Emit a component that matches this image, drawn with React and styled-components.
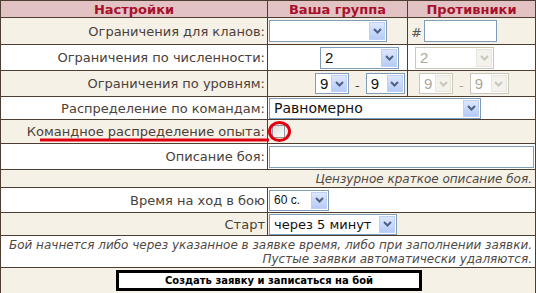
import styled, { createGlobalStyle } from 'styled-components';

const GlobalStyle = createGlobalStyle`
  html, body {
    margin: 0;
    padding: 0;
    background: #fff;
  }
  body {
    font-family: 'DejaVu Sans', Verdana, sans-serif;
    color: #4a413a;
  }
`;

const rowBg = {
  head: '#e2c2c2',
  cream: '#f5f1e7',
  white: '#ffffff',
};

const Frame = styled.div`
  width: 536px;
  box-sizing: border-box;
  border: 1px solid #4e3e31;
`;

const Row = styled.div`
  position: relative;
  display: flex;
  height: ${({ $h }) => $h}px;
  background: ${({ $bg }) => rowBg[$bg]};
  & + & {
    border-top: 1px solid #4e3e31;
  }
`;

const Label = styled.div`
  width: 266px;
  flex: none;
  display: flex;
  align-items: center;
  justify-content: flex-end;
  padding-right: 2px;
  box-sizing: border-box;
  font-size: 13px;
  white-space: nowrap;
`;

const Cell = styled.div`
  display: flex;
  align-items: center;
  gap: ${({ $gap }) => $gap || 0}px;
  width: ${({ $w }) => ($w ? `${$w}px` : 'auto')};
  flex: ${({ $w }) => ($w ? 'none' : 1)};
  padding-left: ${({ $pl }) => $pl || 0}px;
  box-sizing: border-box;
  border-left: 1px solid #4e3e31;
`;

const HeadCell = styled.div`
  width: ${({ $w }) => ($w ? `${$w}px` : 'auto')};
  flex: ${({ $w }) => ($w ? 'none' : 1)};
  box-sizing: border-box;
  display: flex;
  align-items: center;
  justify-content: center;
  font-size: 13px;
  font-weight: bold;
  color: #a8102c;
  & + & {
    border-left: 1px solid #4e3e31;
  }
`;

const NoteCell = styled.div`
  flex: 1;
  display: flex;
  flex-direction: column;
  justify-content: center;
  align-items: flex-end;
  padding-right: 3px;
  font-size: 12px;
  font-style: italic;
  color: #4f4a45;
  line-height: 14px;
  white-space: nowrap;
  text-align: right;
`;

const ButtonCell = styled.div`
  flex: 1;
  display: flex;
  align-items: center;
  justify-content: center;
`;

const SubmitButton = styled.button`
  width: 306px;
  height: 21px;
  box-sizing: border-box;
  margin-left: 2px;
  border: 2px solid #000;
  box-shadow: inset 0 0 0 1px #000;
  background: #fff;
  font-family: 'DejaVu Sans', Verdana, sans-serif;
  font-size: 10px;
  font-weight: bold;
  color: #000;
  padding: 0;
`;

const SelectBox = styled.div`
  display: flex;
  align-items: stretch;
  width: ${({ $w }) => $w}px;
  height: ${({ $h }) => $h || 21}px;
  box-sizing: border-box;
  padding: 1px;
  background: #fff;
  border: 1px solid ${({ $disabled }) => ($disabled ? '#c9c7ba' : '#7f9db9')};
`;

const SelectText = styled.span`
  flex: 1;
  display: flex;
  align-items: center;
  padding-left: 3px;
  font-family: ${({ $arial }) =>
    $arial ? "'Liberation Sans', Arial, sans-serif" : "'DejaVu Sans', Verdana, sans-serif"};
  font-size: ${({ $size }) => $size || 13}px;
  color: ${({ $disabled }) => ($disabled ? '#aca899' : '#111')};
  white-space: nowrap;
  overflow: hidden;
`;

const ArrowButton = styled.span`
  width: 16px;
  flex: none;
  display: flex;
  align-items: center;
  justify-content: center;
  box-sizing: border-box;
  border: 1px solid ${({ $disabled }) => ($disabled ? '#e8e6dc' : '#bfd0f5')};
  background: ${({ $disabled }) =>
    $disabled ? '#f3f2ec' : 'linear-gradient(#dde7fe, #b6cbf6)'};
`;

const TextInput = styled.div`
  width: ${({ $w }) => $w}px;
  height: ${({ $h }) => $h || 21}px;
  box-sizing: border-box;
  background: #fff;
  border: 1px solid #7f9db9;
`;

const Hash = styled.span`
  font-size: 13px;
  color: #555;
  align-self: flex-end;
  padding-bottom: 4px;
`;

const Dash = styled.span`
  font-size: 13px;
  color: ${({ $disabled }) => ($disabled ? '#aca899' : '#4a413a')};
  padding-top: 4px;
`;

const CheckBox = styled.span`
  width: 13px;
  height: 13px;
  box-sizing: border-box;
  margin-left: 4px;
  border: 1px solid #8a9aa8;
  background: linear-gradient(135deg, #dcdcd6, #ffffff);
`;

const Annotation = styled.svg`
  position: absolute;
  left: 0;
  top: 0;
  pointer-events: none;
  overflow: visible;
`;

const Select = ({ value, w, h, disabled, arial, size }) => (
  <SelectBox $w={w} $h={h} $disabled={disabled}>
    <SelectText $disabled={disabled} $arial={arial} $size={size}>
      {value}
    </SelectText>
    <ArrowButton $disabled={disabled}>
      <svg width="9" height="6" viewBox="0 0 9 6">
        <path
          d="M1 1 L4.5 4.5 L8 1"
          fill="none"
          stroke={disabled ? '#c9c7ba' : '#4d6185'}
          strokeWidth="2"
        />
      </svg>
    </ArrowButton>
  </SelectBox>
);

const App = () => (
  <>
    <GlobalStyle />
    <Frame>
      <Row $bg="head" $h={16}>
        <HeadCell $w={266}>Настройки</HeadCell>
        <HeadCell $w={140}>Ваша группа</HeadCell>
        <HeadCell>Противники</HeadCell>
      </Row>
      <Row $bg="cream" $h={26}>
        <Label>Ограничения для кланов:</Label>
        <Cell $w={140} $pl={1}>
          <Select w={118} h={22} />
        </Cell>
        <Cell $pl={3} $gap={2}>
          <Hash>#</Hash>
          <TextInput $w={73} $h={22} />
        </Cell>
      </Row>
      <Row $bg="white" $h={25}>
        <Label>Ограничения по численности:</Label>
        <Cell $w={140} $pl={52}>
          <Select w={79} h={22} value="2" arial size={15} />
        </Cell>
        <Cell $pl={7}>
          <Select w={79} h={22} value="2" arial size={15} disabled />
        </Cell>
      </Row>
      <Row $bg="cream" $h={25}>
        <Label>Ограничения по уровням:</Label>
        <Cell $w={140} $pl={47} $gap={6}>
          <Select w={34} h={21} value="9" arial size={15} />
          <Dash>-</Dash>
          <Select w={39} h={21} value="9" arial size={15} />
        </Cell>
        <Cell $pl={11} $gap={6}>
          <Select w={34} h={21} value="9" arial size={15} disabled />
          <Dash $disabled>-</Dash>
          <Select w={39} h={21} value="9" arial size={15} disabled />
        </Cell>
      </Row>
      <Row $bg="white" $h={22}>
        <Label>Распределение по командам:</Label>
        <Cell $pl={1}>
          <Select w={212} h={21} value="Равномерно" size={14} />
        </Cell>
      </Row>
      <Row $bg="cream" $h={23}>
        <Label>Командное распределение опыта:</Label>
        <Cell>
          <CheckBox />
        </Cell>
        <Annotation width="536" height="23">
          <line x1="39" y1="20" x2="268" y2="20" stroke="#e10010" strokeWidth="3" />
          <ellipse cx="278.5" cy="11.5" rx="10" ry="9" fill="none" stroke="#e10010" strokeWidth="3" />
        </Annotation>
      </Row>
      <Row $bg="white" $h={25}>
        <Label>Описание боя:</Label>
        <Cell $pl={1}>
          <TextInput $w={265} $h={22} />
        </Cell>
      </Row>
      <Row $bg="cream" $h={17}>
        <NoteCell>Цензурное краткое описание боя.</NoteCell>
      </Row>
      <Row $bg="white" $h={24}>
        <Label>Время на ход в бою</Label>
        <Cell $pl={1}>
          <Select w={60} h={21} value="60 с." arial size={12} />
        </Cell>
      </Row>
      <Row $bg="cream" $h={22}>
        <Label>Старт</Label>
        <Cell $pl={1}>
          <Select w={128} h={21} value="через 5 минут" size={13} />
        </Cell>
      </Row>
      <Row $bg="white" $h={31}>
        <NoteCell>
          <span>Бой начнется либо через указанное в заявке время, либо при заполнении заявки.</span>
          <span>Пустые заявки автоматически удаляются.</span>
        </NoteCell>
      </Row>
      <Row $bg="cream" $h={25}>
        <ButtonCell>
          <SubmitButton>Создать заявку и записаться на бой</SubmitButton>
        </ButtonCell>
      </Row>
    </Frame>
  </>
);

export default App;
